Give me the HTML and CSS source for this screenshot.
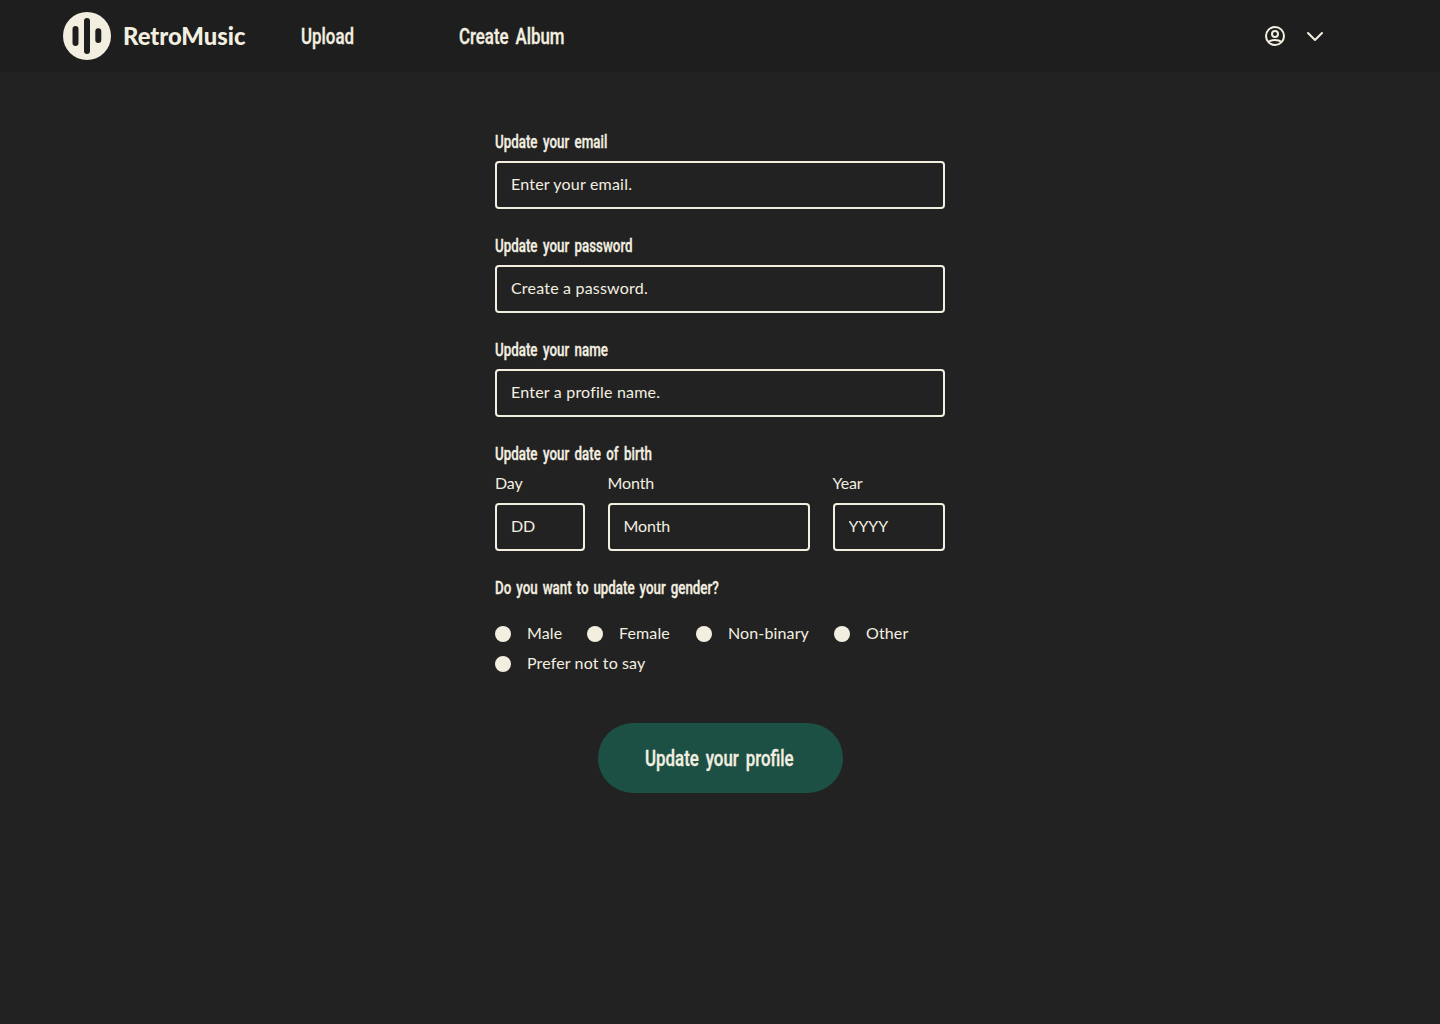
FILE: index.html
```html
<!DOCTYPE html>
<html lang="en">
<head>
<meta charset="utf-8">
<title>RetroMusic</title>
<link rel="stylesheet" href="styles.css">
</head>
<body>
<header class="topbar">
  <a class="brand">
    <svg class="brand-mark" width="48" height="48" viewBox="0 0 48 48">
      <circle cx="24" cy="24" r="24" fill="#f3efe0"/>
      <path d="M12.500 17.100v13.800M24 9v30M35.300 19.200v8.700" fill="none" stroke="#1e1e1e" stroke-width="6" stroke-linecap="round"/>
    </svg>
    <span class="brand-name">RetroMusic</span>
  </a>
  <nav class="links">
    <a class="link link-upload"><span class="condensed">Upload</span></a>
    <a class="link"><span class="condensed">Create Album</span></a>
  </nav>
  <div class="account">
    <svg width="24" height="24" viewBox="0 0 24 24" fill="none" stroke="#f3efe0" stroke-width="2">
      <circle cx="12" cy="12" r="9"/>
      <circle cx="12" cy="10" r="3"/>
      <path d="M5.600 18C7.200 16.500 9.500 16 12 16s4.800.500 6.400 2"/>
    </svg>
    <svg width="24" height="24" viewBox="0 0 24 24" fill="none" stroke="#f3efe0" stroke-width="2" stroke-linecap="round" stroke-linejoin="round">
      <path d="M5 9l7 7 7-7"/>
    </svg>
  </div>
</header>
<form class="profile">
  <div class="field">
    <label class="title" for="email"><span class="condensed">Update your email</span></label>
    <input class="box" id="email" placeholder="Enter your email.">
  </div>
  <div class="field">
    <label class="title" for="password"><span class="condensed">Update your password</span></label>
    <input class="box" id="password" placeholder="Create a password.">
  </div>
  <div class="field">
    <label class="title" for="name"><span class="condensed">Update your name</span></label>
    <input class="box" id="name" placeholder="Enter a profile name.">
  </div>
  <div class="field">
    <div class="title"><span class="condensed">Update your date of birth</span></div>
    <div class="birth">
      <div class="part"><label for="day">Day</label><input class="box" id="day" placeholder="DD"></div>
      <div class="part"><label for="month">Month</label><input class="box" id="month" placeholder="Month"></div>
      <div class="part"><label for="year">Year</label><input class="box" id="year" placeholder="YYYY"></div>
    </div>
  </div>
  <div class="title gender-title"><span class="condensed">Do you want to update your gender?</span></div>
  <div class="genders">
    <label class="option male"><i class="dot"></i><span class="name">Male</span></label>
    <label class="option female"><i class="dot"></i><span class="name">Female</span></label>
    <label class="option nonbinary"><i class="dot"></i><span class="name">Non-binary</span></label>
    <label class="option other"><i class="dot"></i><span class="name">Other</span></label>
    <label class="option"><i class="dot"></i><span class="name">Prefer not to say</span></label>
  </div>
  <button class="submit" type="button"><span class="condensed">Update your profile</span></button>
</form>
</body>
</html>
```
FILE: styles.css
```css
* { box-sizing: border-box; }
body {
  margin: 0;
  min-height: 1024px;
  background: #222;
  color: #f3efe0;
  font: 400 16px/30px Lato, sans-serif;
  letter-spacing: 0.2px;
}
.topbar {
  display: flex;
  align-items: center;
  height: 72px;
  padding: 0 113px 0 63px;
  background: #1e1e1e;
}
.brand { display: flex; align-items: center; gap: 12px; width: 238px; }
.brand-name { font: 900 23.8px/30px Lato, sans-serif; letter-spacing: 0; }
.links { display: flex; }
.link { font: 500 22.5px/30px Roboto, sans-serif; letter-spacing: 0; }
.link-upload { width: 158px; }
.account { display: flex; gap: 16px; margin-left: auto; }
.account svg { display: block; }
.condensed {
  display: inline-block;
  white-space: nowrap;
  word-spacing: 0.16em;
  transform: scaleX(0.75);
  transform-origin: 0 50%;
  -webkit-text-stroke: 0.35px currentColor;
}
.profile { display: flex; flex-direction: column; width: 450px; margin: 0 auto; padding-top: 53px; }
.field { margin-bottom: 20px; }
.title {
  display: block;
  height: 36px;
  padding-top: 2px;
  font: 500 17.8px/30px Roboto, sans-serif;
  letter-spacing: 0;
}
.gender-title .condensed { word-spacing: 0.125em; }
.box {
  display: block;
  width: 100%;
  height: 48px;
  padding: 0 14px 3px;
  border: 2px solid #f3efe0;
  border-radius: 4px;
  outline: none;
  background: transparent;
  color: inherit;
  font: inherit;
  letter-spacing: inherit;
}
.box::placeholder { color: #f3efe0; opacity: 1; }
.birth {
  display: grid;
  grid-template-columns: 20% 45% 25%;
  justify-content: space-between;
  margin-top: -5px;
  letter-spacing: -0.1px;
}
.part label { display: block; height: 35px; }
.genders { display: flex; flex-wrap: wrap; margin-top: 12px; }
.option { display: flex; align-items: center; gap: 16px; height: 30px; white-space: nowrap; letter-spacing: 0.13px; }
.name { padding-bottom: 2px; }
.dot { flex: none; width: 16px; height: 16px; border-radius: 50%; background: #f3efe0; }
.male { width: 92px; }
.female { width: 109px; }
.nonbinary { width: 138px; }
.other { width: 100px; }
.submit {
  align-self: center;
  width: 245px;
  height: 70px;
  margin-top: 44px;
  padding: 0 0 0 47.5px;
  border: 0;
  border-radius: 35px;
  background: #1c5044;
  color: inherit;
  text-align: left;
  font: 500 22.5px/30px Roboto, sans-serif;
}
```
